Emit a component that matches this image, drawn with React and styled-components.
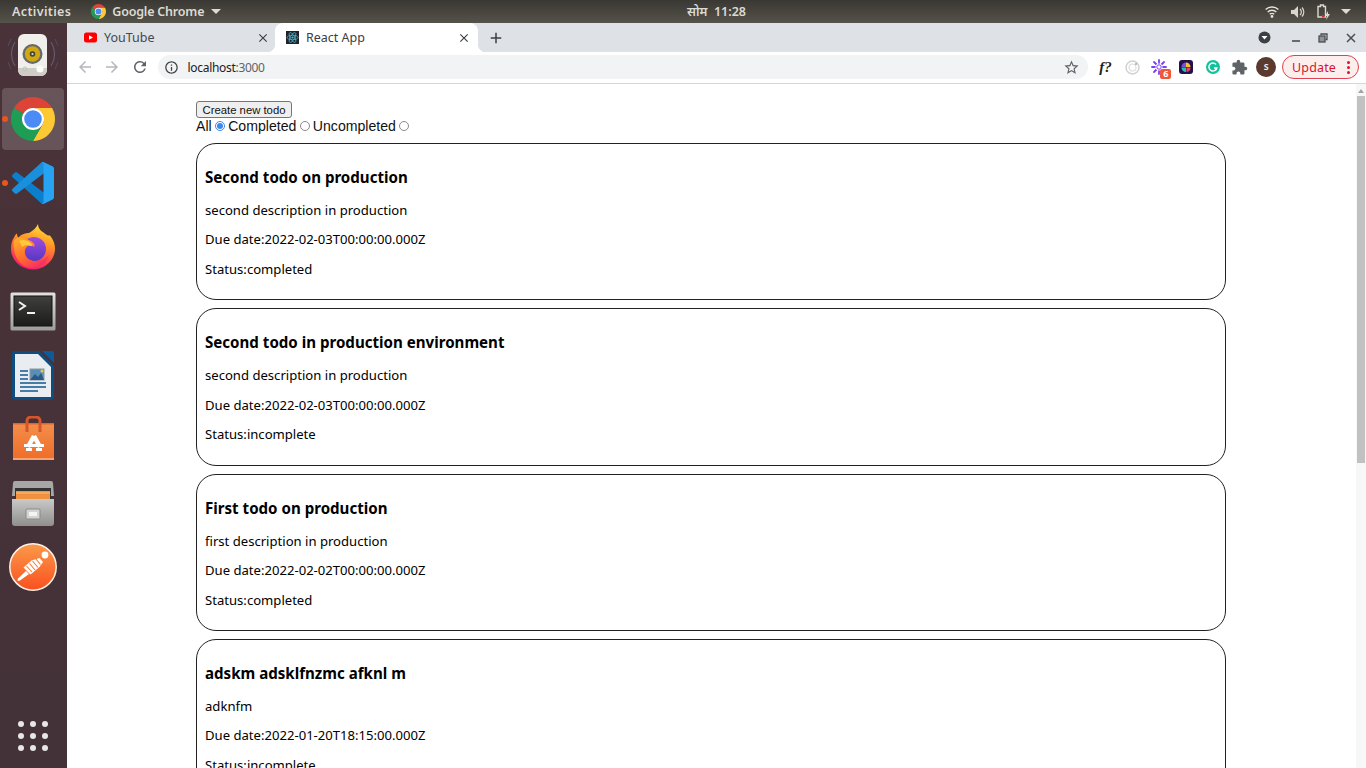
import React from 'react';
import styled, { createGlobalStyle } from 'styled-components';
import { MdArrowBack, MdArrowForward, MdRefresh, MdInfoOutline, MdStarBorder, MdClose, MdAdd, MdExtension } from 'react-icons/md';

const Global = createGlobalStyle`
  html, body { margin: 0; padding: 0; height: 100%; overflow: hidden; background: #fff; }
  * { box-sizing: border-box; }
`;
const UI = '"Noto Sans", "Open Sans", sans-serif';

const Screen = styled.div`width:1366px;height:768px;display:flex;flex-direction:column;overflow:hidden;font-family:${UI};`;
const TopBar = styled.header`height:23px;flex:none;display:grid;grid-template-columns:1fr auto 1fr;align-items:center;
  background:linear-gradient(#3a3833,#55524a);color:#dcdad2;font-size:12.5px;font-weight:600;letter-spacing:.35px;`;
const TopLeft = styled.div`display:flex;align-items:center;padding-left:12px;`;
const AppName = styled.span`margin-left:6px;letter-spacing:-.2px;`;
const AppIcon = styled.span`display:flex;margin-left:20px;`;
const Clock = styled.div`text-align:center;white-space:pre;padding-left:67px;letter-spacing:0;`;
const TopRight = styled.div`display:flex;justify-content:flex-end;align-items:center;gap:12px;padding-right:15px;`;
const Caret = styled.span`width:0;height:0;border-left:5px solid transparent;border-right:5px solid transparent;border-top:5px solid #dcdad2;margin-left:${p=>p.$ml||0}px;`;

const Body = styled.div`flex:1;display:flex;min-height:0;`;
const Dock = styled.nav`width:67px;flex:none;display:flex;flex-direction:column;background:linear-gradient(#4a3239,#433238);`;
const Slot = styled.div`position:relative;height:64px;flex:none;display:flex;align-items:center;justify-content:center;`;
const Tile = styled.div`width:62px;height:62px;margin-left:-1px;border-radius:4px;display:flex;align-items:center;justify-content:center;background:${p=>p.$on?'rgba(255,255,255,.17)':'transparent'};`;
const RunDot = styled.span`position:absolute;left:2px;top:29px;width:6px;height:6px;border-radius:50%;background:#e9541f;`;
const AppsGrid = styled.div`margin-top:auto;margin-bottom:17px;margin-left:18px;display:grid;grid-template-columns:repeat(3,6px);gap:6px;`;
const AppsDot = styled.span`width:6px;height:6px;border-radius:50%;background:#e8e6e6;`;

const Browser = styled.main`flex:1;min-width:0;display:flex;flex-direction:column;`;
const TabStrip = styled.div`height:29px;flex:none;background:#dee1e6;display:flex;align-items:stretch;padding-left:1px;`;
const Tab = styled.div`position:relative;width:${p=>p.$w}px;display:flex;align-items:center;padding:0 ${p=>p.$pr}px 0 ${p=>p.$pl}px;font-size:12.5px;color:${p=>p.$active?'#3c4043':'#45484c'};
  background:${p=>p.$active?'#fff':'transparent'};border-radius:8px 8px 0 0;
  ${p=>p.$active?`
    &::before,&::after{content:"";position:absolute;bottom:0;width:8px;height:8px;}
    &::before{left:-8px;background:radial-gradient(circle at 0 0,transparent 8px,#fff 8.5px);}
    &::after{right:-8px;background:radial-gradient(circle at 100% 0,transparent 8px,#fff 8.5px);}
  `:''}`;
const TabTitle = styled.span`margin-left:7px;flex:1;white-space:nowrap;`;
const TabClose = styled.span`display:flex;color:#3c4043;font-size:14px;`;
const NewTab = styled.span`display:flex;margin-left:9px;align-items:center;font-size:18px;color:#3c4043;`;
const WinControls = styled.div`margin-left:auto;display:flex;align-items:center;`;
const WinBtn = styled.span`width:${p=>p.$w}px;display:flex;justify-content:center;align-items:center;color:#3c4043;`;

const Toolbar = styled.div`height:32px;flex:none;display:flex;align-items:center;background:#fff;border-bottom:1px solid #d5d6d8;padding:0 7px 1px 4px;`;
const NavBtn = styled.span`width:27.5px;display:flex;justify-content:center;font-size:18px;color:${p=>p.$off?'#b4b7bb':'#5f6368'};`;
const Omnibox = styled.div`flex:1;height:24px;margin:0 4px 0 4px;border-radius:12px;background:#f1f3f4;display:flex;align-items:center;padding:0 8px 0 6px;font-size:12px;letter-spacing:-.3px;color:#202124;`;
const InfoSlot = styled.span`display:flex;font-size:15px;color:#3c4043;margin-right:9px;`;
const Port = styled.span`color:#5f6368;`;
const StarSlot = styled.span`margin-left:auto;display:flex;font-size:17px;color:#5f6368;`;
const Ext = styled.span`position:relative;width:26.8px;height:24px;display:flex;align-items:center;justify-content:center;flex:none;`;
const FQ = styled.span`font-family:"Liberation Serif",serif;font-style:italic;font-weight:700;font-size:15px;color:#222;`;
const Badge = styled.span`position:absolute;right:1px;bottom:0;width:11px;height:10px;background:#f0573b;color:#fff;border-radius:2px;font-size:9px;font-weight:700;line-height:10px;text-align:center;`;
const Avatar = styled.span`width:20px;height:20px;border-radius:50%;background:#5a392f;color:#eee;font-size:10px;font-weight:600;text-align:center;line-height:19px;`;
const Update = styled.button`width:77px;height:24px;margin-left:2.4px;flex:none;border:1px solid #e0404f;border-radius:12px;background:#fdeeee;color:#d9142a;font-family:${UI};font-size:12.5px;letter-spacing:.15px;display:flex;align-items:center;justify-content:space-between;padding:0 8px 0 9px;`;
const Dots = styled.span`display:grid;gap:2px;`;
const Dot = styled.span`width:3px;height:3px;border-radius:50%;background:#d9142a;`;

const PageRow = styled.div`flex:1;min-height:0;display:flex;`;
const Page = styled.div`flex:1;min-width:0;overflow:hidden;padding:17px 0 0 129px;`;
const Container = styled.div`width:1030px;`;
const NewBtn = styled.button`display:block;width:96px;height:17px;padding:1px 0 0;font-family:"Liberation Sans",sans-serif;font-size:11.3px;line-height:15px;color:#111;background:#efefef;border:1px solid #767676;border-radius:3px;`;
const Filter = styled.div`display:flex;align-items:center;height:16px;margin-bottom:9px;font-family:"Liberation Sans",sans-serif;font-size:14.1px;color:#111;`;
const Radio = styled.input.attrs({type:'radio',name:'f',readOnly:true})`width:10px;height:10px;margin:0 3px 1px 3.5px;accent-color:#1a73e8;opacity:.85;`;
const Card = styled.article`border:1px solid #222;border-radius:20px;padding:8px 8px 9.19px;margin-bottom:8px;color:#000;`;
const Title = styled.h3`margin:14px 0;font-size:15.1px;line-height:22px;font-weight:700;`;
const Line = styled.p`margin:13.4px 0;font-size:13.1px;line-height:16px;`;
const Scrollbar = styled.div`width:10px;flex:none;background:#f7f7f7;display:flex;flex-direction:column;align-items:center;padding:5px 1px 0;`;
const ArrowUp = styled.span`width:0;height:0;border-left:3.5px solid transparent;border-right:3.5px solid transparent;border-bottom:4px solid #a3a3a3;`;
const Thumb = styled.div`width:8px;height:367px;margin-top:3px;background:#c1c1c1;`;

const Chrome = ({s=44})=>(
  <svg width={s} height={s} viewBox="0 0 48 48">
    <path d="M3.22 12A24 24 0 0 1 44.78 12H24A12 12 0 0 0 13.6 18Z" fill="#db4437"/>
    <path d="M44.78 12A24 24 0 0 1 24 48L34.39 30A12 12 0 0 0 24 12Z" fill="#fcc934"/>
    <path d="M24 48A24 24 0 0 1 3.22 12L13.6 18A12 12 0 0 0 34.39 30Z" fill="#1e9e54"/>
    <circle cx="24" cy="24" r="12" fill="#fff"/><circle cx="24" cy="24" r="9.6" fill="#4b8bf5"/>
  </svg>
);
const Speaker = ()=>(
  <svg width="50" height="50" viewBox="0 0 50 50">
    <g fill="none" stroke="#7d8ba6" strokeOpacity=".55" strokeWidth="1"><path d="M7 12a22 22 0 0 0 0 24"/><path d="M43 12a22 22 0 0 1 0 24"/><path d="M3 9a28 28 0 0 0 0 30" strokeOpacity=".3"/><path d="M47 9a28 28 0 0 1 0 30" strokeOpacity=".3"/></g>
    <rect x="10" y="4" width="29" height="42" rx="6" fill="#f0efec"/>
    <path d="M10 38h29v2a6 6 0 0 1-6 6H16a6 6 0 0 1-6-6z" fill="#cfcdc8"/>
    <circle cx="24.5" cy="24" r="10" fill="#66696b"/><circle cx="24.5" cy="24" r="7.7" fill="#cfa814"/><circle cx="24.5" cy="24" r="2.8" fill="#4a4433"/><circle cx="24.5" cy="24" r="1.1" fill="#ddd"/>
    <circle cx="32" cy="39" r="3.5" fill="#fcfcfb"/><circle cx="17" cy="39" r="2" fill="none" stroke="#c4c2bd"/>
  </svg>
);
const VSCode = ()=>(
  <svg width="42" height="42" viewBox="0 0 100 100">
    <path d="M96.46 89.2L75.85 99.1C73.47 100.26 70.62 99.78 68.75 97.91L1.36 36.42C-.45 34.76-.45 31.9 1.36 30.25L6.87 25.25C8.35 23.9 10.59 23.8 12.19 25.01L93.4 86.6C96.1 88.7 100 86.7 100 83.3V83.5C100 85.9 98.6 88.1 96.46 89.2Z" fill="#0b7fcc"/>
    <path d="M96.46 10.8L75.85.9C73.47-.26 70.62.22 68.75 2.09L1.36 63.58C-.45 65.24-.45 68.1 1.36 69.75L6.87 74.75C8.35 76.1 10.59 76.2 12.19 74.99L93.4 13.4C96.1 11.3 100 13.3 100 16.7V16.5C100 14.1 98.6 11.9 96.46 10.8Z" fill="#1a8fdc"/>
    <path d="M75.86 99.13C73.48 100.27 70.63 99.79 68.76 97.92C71.07 100.23 75 98.6 75 95.33V4.67C75 1.4 71.07-.23 68.76 2.08C70.63.21 73.48-.27 75.86.87L96.46 10.77C98.62 11.81 100 14 100 16.4V83.6C100 86 98.62 88.19 96.46 89.23Z" fill="#26a3f2"/>
  </svg>
);
const Firefox = ()=>(
  <svg width="46" height="46" viewBox="0 0 46 46">
    <defs>
      <linearGradient id="ff1" x1=".65" y1="0" x2=".35" y2="1"><stop offset="0" stopColor="#ffe03c"/><stop offset=".35" stopColor="#ff9a25"/><stop offset=".7" stopColor="#ff4a4a"/><stop offset="1" stopColor="#f5157a"/></linearGradient>
      <linearGradient id="ff2" x1=".5" y1="0" x2=".5" y2="1"><stop offset="0" stopColor="#a04be0"/><stop offset="1" stopColor="#5538c4"/></linearGradient>
      <linearGradient id="ff3" x1="0" y1="0" x2=".7" y2="1"><stop offset="0" stopColor="#ffb52e"/><stop offset=".6" stopColor="#ff6a2a"/><stop offset="1" stopColor="#f52a6a"/></linearGradient>
    </defs>
    <path d="M28 0c0 6 5 8 9 11 1 .5 2 .8 3 .5 3.5 4 5 9 5 13 0 11.5-10 21-22 21S1 36.5 1 24.5c0-4.5 1-8 3-11 .5-1.5 1.5-3 3-4 0 2 .5 3 1.500 4 3-3.500 7.500-4.500 10.500-4.500 3.500-2 7.500-5 9-9z" fill="url(#ff1)"/>
    <circle cx="24" cy="25" r="12" fill="url(#ff2)"/>
    <path d="M4 17c3-5 9-4 15-1 4 2 7 4 5 7-4-3-8-1-9 3-1 6 3 10 9 11 6 1 12-1 15-7-2 9-9 14-17 14C10 44 2 31 4 17z" fill="url(#ff3)"/>
    <path d="M9 17c4-2 9-1 13 3 1 1 0 2-1 2-3-1-7-1-9 1-1-3-2-4-3-6z" fill="#ffc93a"/>
  </svg>
);
const Terminal = ()=>(
  <svg width="46" height="39" viewBox="0 0 46 39">
    <defs><linearGradient id="t1" x1="0" y1="0" x2="0" y2="1"><stop offset="0" stopColor="#e2e2e0"/><stop offset="1" stopColor="#9c9c9a"/></linearGradient>
    <linearGradient id="t2" x1="0" y1="0" x2="0" y2="1"><stop offset="0" stopColor="#3f3f3e"/><stop offset="1" stopColor="#1c1c1c"/></linearGradient></defs>
    <rect x=".5" y=".5" width="45" height="38" rx="1.5" fill="url(#t1)"/>
    <rect x="3.5" y="3.5" width="39" height="31" fill="#111"/><rect x="4.5" y="4.5" width="37" height="29" fill="url(#t2)"/>
    <path d="M9 10l6 4-6 4" fill="none" stroke="#f2f2f2" strokeWidth="2"/><path d="M17 21h8" stroke="#f2f2f2" strokeWidth="2"/>
  </svg>
);
const Writer = ()=>(
  <svg width="42" height="49" viewBox="0 0 42 49">
    <path d="M3 0h24l15 15v31a3 3 0 0 1-3 3H3a3 3 0 0 1-3-3V3a3 3 0 0 1 3-3z" fill="#0f4c80"/>
    <path d="M30 0h10a2 2 0 0 1 2 2v10z" fill="#0d5a9c"/>
    <path d="M3 3h23l13 13v30H3z" fill="#e9edf1"/>
    <g stroke="#12578f" strokeWidth="1.6"><path d="M8 20h8M8 24h8M8 28h8M8 32h26M8 36h26M8 40h18"/></g>
    <rect x="18" y="18" width="14" height="11" fill="#5b8db5" stroke="#8a9aa8"/><path d="M18 29l5-6 3 3 3-4 3 7z" fill="#2a5a84"/><circle cx="30" cy="20" r="1.5" fill="#e9c84a"/>
  </svg>
);
const Store = ()=>(
  <svg width="43" height="46" viewBox="0 0 43 46">
    <defs><linearGradient id="s1" x1="0" y1="0" x2="0" y2="1"><stop offset="0" stopColor="#f38f4c"/><stop offset="1" stopColor="#ef6c28"/></linearGradient></defs>
    <path d="M1 7h41v37H1z" fill="url(#s1)"/><path d="M1 7h41v1.5H1z" fill="#d9682f"/><path d="M1 42h41v2H1z" fill="#f7a26f"/>
    <path d="M15 16V5a4 4 0 0 1 4-4h5a4 4 0 0 1 4 4v11" fill="none" stroke="#d6552a" strokeWidth="3"/>
    <path d="M22 20l-6 11M22 20l6 11" stroke="#fff" strokeWidth="4.5"/>
    <path d="M12 28h20v3H12zM14 32h6v3h-6zM24 32h6v3h-6z" fill="#fff"/>
  </svg>
);
const Files = ()=>(
  <svg width="42" height="45" viewBox="0 0 42 45">
    <defs><linearGradient id="f1" x1="0" y1="0" x2="0" y2="1"><stop offset="0" stopColor="#c9c9c7"/><stop offset="1" stopColor="#8f8f8d"/></linearGradient></defs>
    <path d="M3 0h36a2 2 0 0 1 2 2l1 13H0L1 2a2 2 0 0 1 2-2z" fill="#a7a7a5"/>
    <rect x="3" y="7" width="36" height="12" fill="#333"/><rect x="4" y="10" width="34" height="9" fill="#f0913f"/><path d="M4 12h34" stroke="#f6c07e"/>
    <path d="M0 18h42v24a3 3 0 0 1-3 3H3a3 3 0 0 1-3-3z" fill="url(#f1)"/>
    <rect x="14" y="28" width="14" height="10" rx="1" fill="#d4d4d2" stroke="#8a8a88"/><rect x="17" y="31" width="8" height="4" fill="#f4f4f2"/>
  </svg>
);
const Postman = ()=>(
  <svg width="48" height="48" viewBox="0 0 48 48">
    <defs><linearGradient id="p1" x1="0" y1="0" x2="0" y2="1"><stop offset="0" stopColor="#fb9a49"/><stop offset="1" stopColor="#f9501f"/></linearGradient></defs>
    <circle cx="24" cy="24" r="23.2" fill="url(#p1)" stroke="#fdf1e8" strokeWidth="1.5"/>
    <g fill="#fff"><circle cx="36" cy="12" r="3.4"/><path d="M30.5 15l3.5 4-3.5 5-9 7.5-7-7 8-7z"/><path d="M17 28l3 3-9 6.5-2.5.5.5-2.5z"/></g>
    <path d="M26.5 15.5l5 6M23.5 18l5.5 6.5M20.5 20.5l5.5 6.5M17.500 23l5.500 6" stroke="#f97a35" strokeWidth="1.1"/>
  </svg>
);
const YT = ()=>(<svg width="13" height="13" viewBox="0 0 13 13"><rect y="1.5" width="13" height="10" rx="2.5" fill="#f00"/><path d="M5 4.2v4.6l4-2.3z" fill="#fff"/></svg>);
const ReactIco = ()=>(<svg width="13" height="13" viewBox="0 0 13 13"><rect width="13" height="13" fill="#20232a"/><g fill="none" stroke="#53c1de" strokeWidth=".7"><ellipse cx="6.5" cy="6.5" rx="5.5" ry="2.2"/><ellipse cx="6.5" cy="6.5" rx="5.5" ry="2.2" transform="rotate(60 6.5 6.5)"/><ellipse cx="6.5" cy="6.5" rx="5.5" ry="2.2" transform="rotate(120 6.5 6.5)"/></g><circle cx="6.5" cy="6.5" r="1.1" fill="#53c1de"/></svg>);
const Wifi = ()=>(<svg width="14" height="12" viewBox="0 0 14 12" fill="none" stroke="#e4e2db" strokeWidth="1.4"><path d="M.6 3.6a9 9 0 0 1 12.8 0"/><path d="M2.7 6a6 6 0 0 1 8.6 0"/><path d="M4.8 8.3a3 3 0 0 1 4.4 0"/><circle cx="7" cy="10.5" r=".7" fill="#e4e2db"/></svg>);
const Volume = ()=>(<svg width="14" height="12" viewBox="0 0 14 12"><path d="M0 4h3l4-4v12L3 8H0z" fill="#d8d6cf"/><path d="M9 3a4 4 0 0 1 0 6M11 1.5a6.5 6.5 0 0 1 0 9" fill="none" stroke="#d8d6cf" strokeWidth="1.2"/></svg>);
const Battery = ()=>(<svg width="13" height="16" viewBox="0 0 13 16"><path d="M3.5 1h3v1.5h2V13H1V2.5h2.5z" fill="none" stroke="#dcdad2" strokeWidth="1.4"/><rect x="5" y="11" width="2.5" height="2.5" fill="#d8281f"/><path d="M11 7l-3 5h2l-1 4 4-6h-2z" fill="#dcdad2"/></svg>);
const Profile = ()=>(<svg width="13" height="13" viewBox="0 0 13 13"><circle cx="6.5" cy="6.5" r="6" fill="#3c4043"/><path d="M3.5 5h6l-3 3.5z" fill="#fff"/></svg>);
const Minimize = ()=>(<svg width="10" height="10" viewBox="0 0 10 10"><path d="M1 8h8" stroke="#4a4d51" strokeWidth="1.6"/></svg>);
const Restore = ()=>(<svg width="10" height="10" viewBox="0 0 10 10" fill="none" stroke="#4a4d51" strokeWidth="1.3"><path d="M3 2.5V1h6v5.5H7.5"/><rect x="1" y="3" width="6" height="6" fill="#8f9297"/></svg>);
const WinX = ()=>(<svg width="10" height="10" viewBox="0 0 10 10"><path d="M1 1l8 8M9 1l-8 8" stroke="#4a4d51" strokeWidth="1.5"/></svg>);
const Ring = ()=>(<svg width="15" height="15" viewBox="0 0 15 15" fill="none"><circle cx="7.5" cy="7.5" r="6.5" stroke="#cfcfcf" strokeWidth="1.4"/><circle cx="7.5" cy="7.5" r="3.5" stroke="#dcdcdc" strokeWidth="1.2"/><circle cx="11" cy="4" r="1" fill="#aaa"/></svg>);
const Burst = ()=>(<svg width="16" height="16" viewBox="0 0 16 16"><g stroke="#7a3ff2" strokeWidth="1.8" strokeLinecap="round"><path d="M8 1v14M1 8h14M3 3l10 10M13 3L3 13"/></g><circle cx="8" cy="8" r="3.5" fill="#fff"/><circle cx="8" cy="8" r="2.2" fill="none" stroke="#7a3ff2"/></svg>);
const Slackish = ()=>(<svg width="14" height="14" viewBox="0 0 14 14"><rect width="14" height="14" rx="3" fill="#23104f"/><path d="M7 2.5a4.5 4.5 0 0 1 4.5 4.5H7z" fill="#f6c22d"/><path d="M7 2.5V7H2.5A4.5 4.5 0 0 1 7 2.5z" fill="#7a4fe0"/><path d="M2.5 7.5H7V12a4.5 4.5 0 0 1-4.5-4.5z" fill="#1fc7a5"/><path d="M7.5 7.5h4a4.5 4.5 0 0 1-4 4.5z" fill="#ef3e6b"/></svg>);
const Grammarly = ()=>(<svg width="14" height="14" viewBox="0 0 14 14"><circle cx="7" cy="7" r="7" fill="#11c29a"/><path d="M10 4.5a4 4 0 1 0 .8 3.5H8" fill="none" stroke="#fff" strokeWidth="1.5"/></svg>);

const todos = [
  ['Second todo on production','second description in production','2022-02-03T00:00:00.000Z','completed'],
  ['Second todo in production environment','second description in production','2022-02-03T00:00:00.000Z','incomplete'],
  ['First todo on production','first description in production','2022-02-02T00:00:00.000Z','completed'],
  ['adskm adsklfnzmc afknl m','adknfm','2022-01-20T18:15:00.000Z','incomplete'],
];
const dock = [<Speaker/>,<Chrome/>,<VSCode/>,<Firefox/>,<Terminal/>,<Writer/>,<Store/>,<Files/>,<Postman/>];

export default function App(){
  return (<>
    <Global/>
    <Screen>
      <TopBar>
        <TopLeft>Activities<AppIcon><Chrome s={15}/></AppIcon><AppName>Google Chrome</AppName><Caret $ml={7}/></TopLeft>
        <Clock>सोम  11:28</Clock>
        <TopRight><Wifi/><Volume/><Battery/><Caret $ml={-1}/></TopRight>
      </TopBar>
      <Body>
        <Dock>
          {dock.map((icon,i)=>(
            <Slot key={i}>
              {(i===1||i===2)&&<RunDot/>}
              <Tile $on={i===1}>{icon}</Tile>
            </Slot>
          ))}
          <AppsGrid>{Array.from({length:9},(_,i)=><AppsDot key={i}/>)}</AppsGrid>
        </Dock>
        <Browser>
          <TabStrip>
            <Tab $w={207} $pl={16} $pr={5}><YT/><TabTitle>YouTube</TabTitle><TabClose><MdClose/></TabClose></Tab>
            <Tab $active $w={203} $pl={11} $pr={7}><ReactIco/><TabTitle>React App</TabTitle><TabClose><MdClose/></TabClose></Tab>
            <NewTab><MdAdd/></NewTab>
            <WinControls>
              <WinBtn $w={36}><Profile/></WinBtn>
              <WinBtn $w={28}><Minimize/></WinBtn>
              <WinBtn $w={26}><Restore/></WinBtn>
              <WinBtn $w={30}><WinX/></WinBtn>
            </WinControls>
          </TabStrip>
          <Toolbar>
            <NavBtn $off><MdArrowBack/></NavBtn>
            <NavBtn $off><MdArrowForward/></NavBtn>
            <NavBtn><MdRefresh/></NavBtn>
            <Omnibox>
              <InfoSlot><MdInfoOutline/></InfoSlot>localhost<Port>:3000</Port>
              <StarSlot><MdStarBorder/></StarSlot>
            </Omnibox>
            <Ext><FQ>f?</FQ></Ext>
            <Ext><Ring/></Ext>
            <Ext><Burst/><Badge>6</Badge></Ext>
            <Ext><Slackish/></Ext>
            <Ext><Grammarly/></Ext>
            <Ext><MdExtension size={17} color="#5f6368"/></Ext>
            <Ext><Avatar>s</Avatar></Ext>
            <Update>Update<Dots><Dot/><Dot/><Dot/></Dots></Update>
          </Toolbar>
          <PageRow>
            <Page>
              <Container>
                <NewBtn>Create new todo</NewBtn>
                <Filter>All <Radio defaultChecked/> Completed <Radio/> Uncompleted <Radio/></Filter>
                {todos.map(t=>(
                  <Card key={t[0]}>
                    <Title>{t[0]}</Title>
                    <Line>{t[1]}</Line>
                    <Line>Due date:{t[2]}</Line>
                    <Line>Status:{t[3]}</Line>
                  </Card>
                ))}
              </Container>
            </Page>
            <Scrollbar><ArrowUp/><Thumb/></Scrollbar>
          </PageRow>
        </Browser>
      </Body>
    </Screen>
  </>);
}
